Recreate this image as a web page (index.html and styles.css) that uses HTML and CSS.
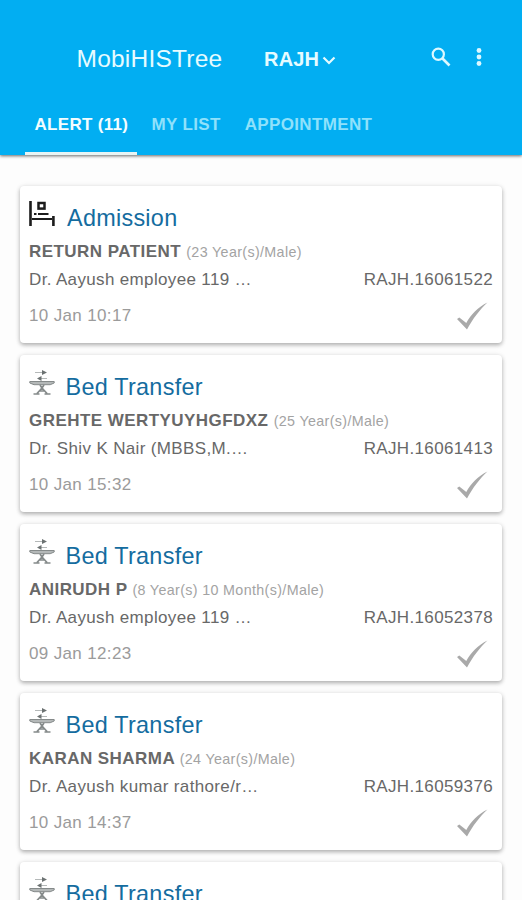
FILE: index.html
```
<!DOCTYPE html>
<html lang="en">
<head>
  <meta charset="UTF-8">
  <meta name="viewport" content="width=device-width, initial-scale=1.0">
  <title>MobiHISTree</title>
  <link rel="stylesheet" href="styles.css">
</head>
<body>

<svg class="defs">
  <symbol id="icon-admission" viewBox="0 0 26 26">
    <path d="M1.500 0v25M24.400 15v10" fill="none" stroke="#1c1c1c" stroke-width="2.600"/>
    <path d="M5 13h2.500M9 13h10.500M3 18h20" fill="none" stroke="#1c1c1c" stroke-width="2"/>
    <rect x="9.500" y="2" width="6" height="5.600" fill="none" stroke="#1c1c1c" stroke-width="2.500"/>
  </symbol>
  <symbol id="icon-transfer" viewBox="0 0 26 26">
    <path d="M6 2.500h9M10 8.500h8" stroke="#b4b8b8" stroke-width="1"/>
    <path d="M13 0L18 2.500l-5 2.500zM12.500 6L8 8.500l4.500 2.500z" fill="#6c7272"/>
    <path d="M.8 11.500h24.400v1.500l-4 1.700H5L.8 13z" fill="#b4b8b8" stroke="#858a8a" stroke-width="1"/>
    <path d="M11 15l2 3M15 15l-2 3-5 5.500M13 18l5 5.500M10 21h6M4.500 24h6M15.500 24h6" fill="none" stroke="#858a8a" stroke-width="1.700"/>
  </symbol>
  <symbol id="icon-check" viewBox="0 0 32 28">
    <path d="M1 17l2.300-1.500 7 5.500C15 12.500 22 5 31.500 .5 23.500 8 17 16.500 11 27.500z" fill="#a9a9a9"/>
  </symbol>
</svg>

<header class="header">
  <div class="toolbar">
    <h1 class="app-name">MobiHISTree</h1>
    <div class="site">
      RAJH
      <svg class="chevron" viewBox="0 0 14 9"><path d="M1.500 1.500L7 7l5.500-5.500" fill="none" stroke="#e6fbff" stroke-width="2.200"/></svg>
    </div>
    <svg class="search" viewBox="0 0 20 20">
      <circle cx="7.300" cy="7.300" r="5.600" fill="none" stroke="#dcf8ff" stroke-width="2.200"/>
      <path d="M11.500 11.500l7 7" stroke="#dcf8ff" stroke-width="2.700"/>
    </svg>
    <svg class="more" viewBox="0 0 6 18">
      <g fill="#dcf8ff"><circle cx="3" cy="2.500" r="2.400"/><circle cx="3" cy="9" r="2.400"/><circle cx="3" cy="15.500" r="2.400"/></g>
    </svg>
  </div>
  <nav class="tabs">
    <div class="tab active">ALERT (11)</div>
    <div class="tab">MY LIST</div>
    <div class="tab">APPOINTMENT</div>
  </nav>
</header>

<main class="list">
  <div class="card">
    <div class="card-title admission"><svg class="icon"><use href="#icon-admission"/></svg>Admission</div>
    <div class="patient">RETURN PATIENT <span>(23 Year(s)/Male)</span></div>
    <div class="row doctor"><span>Dr. Aayush employee 119 …</span><span>RAJH.16061522</span></div>
    <div class="row date"><span>10 Jan 10:17</span><svg class="check"><use href="#icon-check"/></svg></div>
  </div>

  <div class="card">
    <div class="card-title"><svg class="icon"><use href="#icon-transfer"/></svg>Bed Transfer</div>
    <div class="patient">GREHTE WERTYUYHGFDXZ <span>(25 Year(s)/Male)</span></div>
    <div class="row doctor"><span>Dr. Shiv K Nair (MBBS,M.…</span><span>RAJH.16061413</span></div>
    <div class="row date"><span>10 Jan 15:32</span><svg class="check"><use href="#icon-check"/></svg></div>
  </div>

  <div class="card">
    <div class="card-title"><svg class="icon"><use href="#icon-transfer"/></svg>Bed Transfer</div>
    <div class="patient">ANIRUDH P <span>(8 Year(s) 10 Month(s)/Male)</span></div>
    <div class="row doctor"><span>Dr. Aayush employee 119 …</span><span>RAJH.16052378</span></div>
    <div class="row date"><span>09 Jan 12:23</span><svg class="check"><use href="#icon-check"/></svg></div>
  </div>

  <div class="card">
    <div class="card-title"><svg class="icon"><use href="#icon-transfer"/></svg>Bed Transfer</div>
    <div class="patient">KARAN SHARMA <span>(24 Year(s)/Male)</span></div>
    <div class="row doctor"><span>Dr. Aayush kumar rathore/r…</span><span>RAJH.16059376</span></div>
    <div class="row date"><span>10 Jan 14:37</span><svg class="check"><use href="#icon-check"/></svg></div>
  </div>

  <div class="card">
    <div class="card-title"><svg class="icon"><use href="#icon-transfer"/></svg>Bed Transfer</div>
  </div>
</main>

</body>
</html>
```
FILE: styles.css
```
* {
  box-sizing: border-box;
}
body {
  margin: 0;
  height: 900px;
  overflow: hidden;
  display: flex;
  flex-direction: column;
  background-color: #fdfdfd;
  font-family: "Liberation Sans", Arial, sans-serif;
}
.defs {
  display: none;
}
.header {
  flex: none;
  height: 155px;
  background-color: #02aef2;
  box-shadow: 0 1px 3px rgba(0, 0, 0, 0.6);
  display: flex;
  flex-direction: column;
}
.toolbar {
  height: 95px;
  padding: 23px 40px 0 76.5px;
  display: flex;
  align-items: center;
}
.app-name {
  margin: 0;
  width: 187.5px;
  font-size: 24.5px;
  font-weight: normal;
  letter-spacing: 0.22px;
  color: #e6fbff;
}
.site {
  flex: 1;
  display: flex;
  align-items: center;
  gap: 3px;
  font-size: 20px;
  font-weight: bold;
  letter-spacing: 0.2px;
  color: #e6fbff;
}
.chevron {
  width: 14px;
  height: 9px;
  margin-top: 3px;
}
.search {
  width: 20px;
  height: 20px;
  margin: 0 25px 4px 0;
}
.more {
  width: 6px;
  height: 18px;
  margin-bottom: 4px;
}
.tabs {
  height: 60px;
  padding-left: 25px;
  display: flex;
  gap: 5px;
}
.tab {
  padding: 0 9.5px;
  line-height: 60px;
  font-size: 17px;
  font-weight: bold;
  letter-spacing: 0.35px;
  white-space: nowrap;
  color: #8fe1fb;
}
.tab.active {
  width: 112px;
  letter-spacing: 0.3px;
  color: #f3fdff;
  box-shadow: inset 0 -3px #e8f4f4;
}
.list {
  padding: 31px 20px 0;
  display: flex;
  flex-direction: column;
  gap: 12px;
}
.card {
  flex: none;
  height: 157px;
  padding: 14px 9px 0;
  background-color: #fff;
  border-radius: 4px;
  box-shadow: 0 2px 4px rgba(0, 0, 0, 0.3), 0 0 6px rgba(0, 0, 0, 0.06);
}
.card-title {
  height: 36px;
  line-height: 36px;
  display: flex;
  gap: 10.5px;
  font-size: 23.4px;
  letter-spacing: 0.28px;
  color: #146c9f;
}
.card-title.admission {
  gap: 12px;
}
.icon {
  width: 26px;
  height: 26px;
  margin-top: 1px;
}
.patient {
  line-height: 32px;
  font-size: 17px;
  font-weight: bold;
  letter-spacing: 0.45px;
  color: #686868;
  white-space: nowrap;
}
.patient span {
  font-size: 14.3px;
  font-weight: normal;
  letter-spacing: 0.35px;
  color: #a3a3a3;
}
.row {
  display: flex;
  justify-content: space-between;
  align-items: center;
  font-size: 17px;
  letter-spacing: 0.35px;
}
.doctor {
  line-height: 24px;
  color: #686868;
}
.date {
  line-height: 48px;
  color: #9b9b9b;
}
.check {
  width: 32px;
  height: 28px;
  margin-right: 5px;
}
```
